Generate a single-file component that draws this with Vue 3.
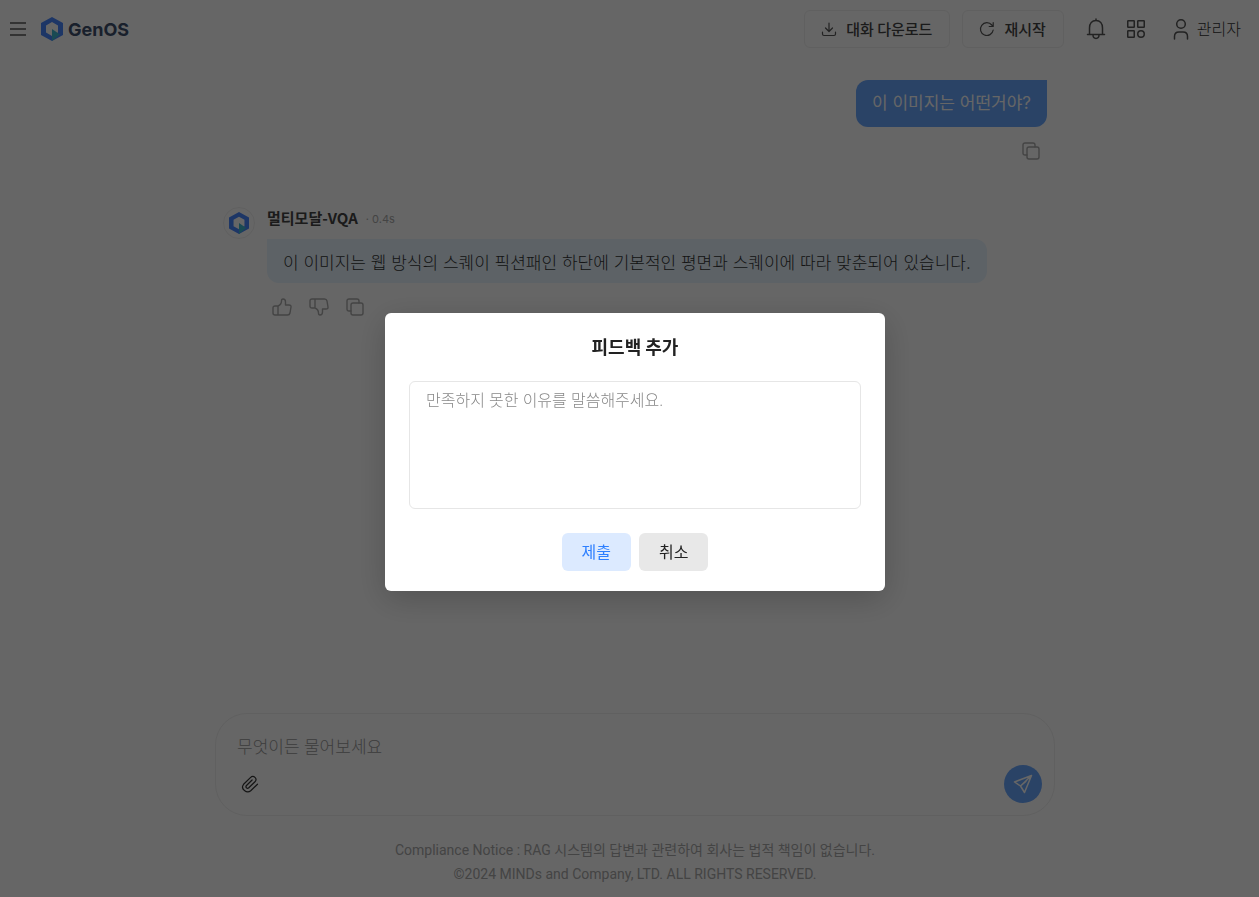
<template>
  <div class="page">
    <header class="topbar">
      <div class="topbar-left">
        <button type="button" class="icon-btn" aria-label="메뉴">
          <svg width="16" height="14" viewBox="0 0 16 14" fill="none" stroke="#555" stroke-width="1.5">
            <path d="M0 1h16M0 7h16M0 13h16" />
          </svg>
        </button>
        <a href="#" class="brand">
          <svg width="22" height="24" viewBox="0 0 22 24">
            <path fill="#4a88ff" fill-rule="evenodd" d="M11 0 22 6v12l-11 6L0 18V6zM11 5 5 8.500v7L11 19l6-3.500v-7z" />
            <path fill="#40b8d0" d="M11 12l8 5.500L11 24z" />
          </svg>
          <span>GenOS</span>
        </a>
      </div>
      <div class="topbar-right">
        <button type="button" class="outline-btn">
          <svg width="16" height="16" viewBox="0 0 16 16" class="line">
            <path d="M8 2v8.500M4.500 7 8 10.500 11.500 7M1.500 11v2q0 1.500 1.500 1.500h10q1.500 0 1.500-1.500v-2" />
          </svg>
          <span>대화 다운로드</span>
        </button>
        <button type="button" class="outline-btn">
          <svg width="16" height="16" viewBox="0 0 16 16" class="line">
            <path d="M14.200 9A6.400 6.400 0 1 1 12.800 4L14 5.300M14.200 1.500v4h-4" />
          </svg>
          <span>재시작</span>
        </button>
        <nav class="tools">
          <button type="button" class="icon-btn" aria-label="알림">
            <svg width="20" height="22" viewBox="0 0 20 22" class="line bold">
              <path d="M1.500 16.500h17M3.500 16.500V10C3.500 5.500 6 2.500 10 2.500s6.500 3 6.500 7.500v6.500M10 2.500V1M7 17c0 4.500 6 4.500 6 0" />
            </svg>
          </button>
          <button type="button" class="icon-btn" aria-label="앱">
            <svg width="20" height="20" viewBox="0 0 20 20" class="line bold">
              <rect x="1.750" y="1.750" width="6.500" height="6.500" rx="0.500" />
              <rect x="11.750" y="1.750" width="6.500" height="6.500" rx="0.500" />
              <rect x="1.750" y="11.750" width="6.500" height="6.500" rx="0.500" />
              <circle cx="15" cy="15" r="3.250" />
            </svg>
          </button>
        </nav>
        <button type="button" class="user-btn">
          <svg width="16" height="22" viewBox="0 0 16 22" class="line bold">
            <circle cx="8" cy="6" r="4.300" />
            <path d="M1.500 21v-2.500q0-4.500 4.500-4.500h4q4.500 0 4.500 4.500V21" />
          </svg>
          <span>관리자</span>
        </button>
      </div>
    </header>

    <main class="chat">
      <section class="question">
        <p class="bubble bubble-user">이 이미지는 어떤거야?</p>
        <button type="button" class="icon-btn" aria-label="복사">
          <svg width="18" height="18" viewBox="0 0 18 18" class="line muted">
            <path d="M5 13H3q-2 0-2-2V3q0-2 2-2h8q2 0 2 2v2" />
            <rect x="5" y="5" width="12" height="12" rx="2" />
          </svg>
        </button>
      </section>

      <section class="answer">
        <div class="avatar">
          <svg width="20" height="22" viewBox="0 0 22 24">
            <path fill="#4a88ff" fill-rule="evenodd" d="M11 0 22 6v12l-11 6L0 18V6zM11 5 5 8.500v7L11 19l6-3.500v-7z" />
            <path fill="#40b8d0" d="M11 12l8 5.500L11 24z" />
          </svg>
        </div>
        <div class="answer-body">
          <div class="answer-head">
            <strong>멀티모달-VQA</strong>
            <span>· 0.4s</span>
          </div>
          <p class="bubble bubble-bot">이 이미지는 웹 방식의 스퀘이 픽션패인 하단에 기본적인 평면과 스퀘이에 따라 맞춘되어 있습니다.</p>
          <div class="actions">
            <button type="button" class="icon-btn" aria-label="좋아요">
              <svg width="20" height="18" viewBox="0 0 20 18" class="line muted">
                <path d="M6 8h-3Q1 8 1 10v5q0 2 2 2h3zM6 8q3.500-1.500 3.500-5 0-2 1.500-2 2.500 0 2.500 3v3H17q2.300 0 2 2l-1 6q-.4 2-2.500 2H6" />
              </svg>
            </button>
            <button type="button" class="icon-btn" aria-label="싫어요">
              <svg width="20" height="18" viewBox="0 0 20 18" class="line muted">
                <path d="M6 10h-3Q1 10 1 8V3q0-2 2-2h3zM6 10q3.500 1.500 3.500 5 0 2 1.500 2 2.500 0 2.500-3v-3H17q2.300 0 2-2l-1-6q-.4-2-2.500-2H6" />
              </svg>
            </button>
            <button type="button" class="icon-btn" aria-label="복사">
              <svg width="18" height="18" viewBox="0 0 18 18" class="line muted">
                <path d="M5 13H3q-2 0-2-2V3q0-2 2-2h8q2 0 2 2v2" />
                <rect x="5" y="5" width="12" height="12" rx="2" />
              </svg>
            </button>
          </div>
        </div>
      </section>
    </main>

    <div class="composer-wrap">
      <form class="composer" @submit.prevent="enviarPergunta">
        <input v-model="pergunta" type="text" aria-label="질문" placeholder="무엇이든 물어보세요" />
        <div class="composer-bar">
          <button type="button" class="icon-btn" aria-label="파일 첨부">
            <svg width="18" height="18" viewBox="0 0 18 18" class="line clip">
              <path d="M16.500 9.200 9.700 15.700C6 19-1 14 2.600 9.300L9.400 2.600c3.200-3 7.400 1 4.600 4.200l-6.200 6c-1.700 1.500-3.800-.6-2.300-2.300l5.600-5.500" />
            </svg>
          </button>
          <button type="submit" class="send-btn" aria-label="보내기">
            <svg width="20" height="20" viewBox="0 0 20 20" fill="none" stroke="#fff" stroke-width="1.500" stroke-linejoin="round">
              <path d="M18.500 1.500 1.500 8l6 4 4 6.500zM18.500 1.500l-11 10.500M7.500 12l6-5" />
            </svg>
          </button>
        </div>
      </form>
    </div>

    <footer class="notice">
      <p>Compliance Notice : RAG 시스템의 답변과 관련하여 회사는 법적 책임이 없습니다.</p>
      <p>©2024 MINDs and Company, LTD. ALL RIGHTS RESERVED.</p>
    </footer>

    <div v-if="aberto" class="overlay">
      <form class="modal" role="dialog" aria-labelledby="feedback-title" @submit.prevent="fechar">
        <h2 id="feedback-title">피드백 추가</h2>
        <textarea v-model="motivo" aria-labelledby="feedback-title" placeholder="만족하지 못한 이유를 말씀해주세요."></textarea>
        <div class="modal-actions">
          <button type="submit" class="btn btn-primary">제출</button>
          <button type="button" class="btn" @click="fechar">취소</button>
        </div>
      </form>
    </div>
  </div>
</template>

<script setup>
import { ref } from 'vue';

const aberto = ref(true);
const motivo = ref('');
const pergunta = ref('');

const fechar = () => {
  aberto.value = false;
  motivo.value = '';
}

const enviarPergunta = () => {
  if (!pergunta.value.trim()) return;
  pergunta.value = '';
}
</script>

<style>
body {
  margin: 0;
  background: #fff;
}
</style>

<style scoped>
.page {
  min-height: 100vh;
  display: flex;
  flex-direction: column;
  font-family: 'Open Sans', 'Noto Sans CJK KR', sans-serif;
  font-size: 16px;
  font-weight: 300;
  color: #333;
}
* {
  box-sizing: border-box;
}
p,
h2 {
  margin: 0;
}
button,
input,
textarea {
  font: inherit;
  color: inherit;
}
button {
  cursor: pointer;
}
svg {
  display: block;
  flex: none;
}
.line {
  fill: none;
  stroke: #555;
  stroke-width: 1.2;
  stroke-linecap: round;
  stroke-linejoin: round;
}
.bold {
  stroke-width: 1.5;
}
.muted {
  stroke: #aaa;
  stroke-width: 1.4;
}
.clip {
  stroke: #333;
}
.icon-btn {
  display: flex;
  padding: 0;
  border: none;
  background: none;
}

/* Topo */
.topbar {
  display: flex;
  align-items: center;
  justify-content: space-between;
  height: 58px;
  padding: 0 18px 0 10px;
}
.topbar-left,
.topbar-right,
.tools {
  display: flex;
  align-items: center;
}
.topbar-left {
  gap: 15px;
}
.brand {
  display: flex;
  align-items: center;
  gap: 5px;
  color: #40506e;
  font-family: Inter, sans-serif;
  font-size: 18px;
  font-weight: 700;
  text-decoration: none;
}
.topbar-right {
  gap: 12px;
}
.outline-btn {
  display: flex;
  align-items: center;
  gap: 9px;
  height: 38px;
  padding: 0 17px 0 16px;
  border: 1px solid #f0f0f0;
  border-radius: 6px;
  background: #fff;
  color: #444;
  font-family: 'Noto Sans CJK KR', sans-serif;
  font-size: 15px;
  font-weight: 500;
}
.outline-btn span,
.user-btn span {
  padding-bottom: 2px;
}
.tools {
  gap: 20px;
  margin: 0 15px 0 10px;
}
.user-btn {
  display: flex;
  align-items: center;
  gap: 8px;
  padding: 0;
  border: none;
  background: none;
}

/* Conversa */
.chat {
  flex: 1;
  width: 100%;
  max-width: 835px;
  margin: 0 auto;
  padding: 22px 0 0 11px;
}
.bubble {
  padding: 10px 16px;
  border-radius: 12px;
  font-family: Inter, 'Noto Sans CJK KR', sans-serif;
  font-size: 17px;
  line-height: 27px;
}
.question {
  display: flex;
  flex-direction: column;
  align-items: flex-end;
}
.question .icon-btn {
  margin: 15px 7px 0 0;
}
.bubble-user {
  border-top-right-radius: 0;
  background: #69a7ff;
  color: #fff;
  font-weight: 400;
}
.answer {
  display: flex;
  gap: 12px;
  margin-top: 47px;
}
.avatar {
  display: flex;
  align-items: center;
  justify-content: center;
  flex: none;
  width: 32px;
  height: 32px;
  border: 1px solid #f0f0f0;
  border-radius: 50%;
}
.answer-head {
  display: flex;
  align-items: center;
  gap: 8px;
  height: 24px;
  margin-bottom: 8px;
}
.answer-head strong {
  padding-bottom: 4px;
  color: #444;
  font-family: 'Noto Sans CJK KR', sans-serif;
  font-size: 15px;
  font-weight: 700;
}
.answer-head span {
  color: #aaa;
  font-family: Inter, sans-serif;
  font-size: 11px;
  font-weight: 400;
}
.bubble-bot {
  padding: 12px 16px 8px;
  border-top-left-radius: 0;
  background: #e8f5ff;
  line-height: 24px;
}
.actions {
  display: flex;
  gap: 17px;
  padding: 15px 5px;
}

/* Campo de pergunta */
.composer-wrap {
  padding-left: 11px;
}
.composer {
  max-width: 840px;
  margin: 0 auto;
  padding: 18px 12px 12px 21px;
  border: 1px solid #f0f0f0;
  border-radius: 32px;
  background: #fff;
}
.composer input {
  display: block;
  width: 100%;
  height: 28px;
  padding: 0;
  border: none;
  outline: none;
  background: none;
  font-size: 17px;
}
.composer input::placeholder {
  color: #999;
  opacity: 1;
}
.composer-bar {
  display: flex;
  align-items: center;
  justify-content: space-between;
  margin-top: 5px;
  padding-left: 4px;
}
.send-btn {
  display: flex;
  align-items: center;
  justify-content: center;
  width: 38px;
  height: 38px;
  padding: 0;
  border: none;
  border-radius: 50%;
  background: #69a7ff;
}
.notice {
  padding: 22px 0 11px 11px;
  color: #aaa;
  font-family: Roboto, 'Noto Sans CJK KR', sans-serif;
  font-size: 14px;
  font-weight: 400;
  line-height: 24px;
  text-align: center;
}

/* Modal de feedback */
.overlay {
  position: fixed;
  inset: 0;
  display: flex;
  align-items: center;
  justify-content: center;
  padding: 7px 0 0 11px;
  background: rgba(0, 0, 0, 0.6);
}
.modal {
  width: 500px;
  max-width: 100%;
  padding: 20px 24px;
  border-radius: 6px;
  background: #fff;
  box-shadow: 0 8px 32px rgba(0, 0, 0, 0.2);
  color: #222;
}
.modal h2 {
  margin-bottom: 22px;
  font-family: 'Noto Sans CJK KR', sans-serif;
  font-size: 18px;
  font-weight: 700;
  line-height: 26px;
  text-align: center;
}
.modal textarea {
  display: block;
  width: 100%;
  height: 128px;
  padding: 6px 16px;
  border: 1px solid #e6e6e6;
  border-radius: 6px;
  outline: none;
  resize: none;
  line-height: 24px;
}
.modal textarea::placeholder {
  color: #888;
  opacity: 1;
}
.modal-actions {
  display: flex;
  justify-content: center;
  gap: 8px;
  margin-top: 24px;
}
.btn {
  height: 38px;
  padding: 0 20px 2px;
  border: none;
  border-radius: 6px;
  background: #e8e8e8;
  font-weight: 400;
}
.btn-primary {
  background: #dceaff;
  color: #2f80ff;
}
</style>
